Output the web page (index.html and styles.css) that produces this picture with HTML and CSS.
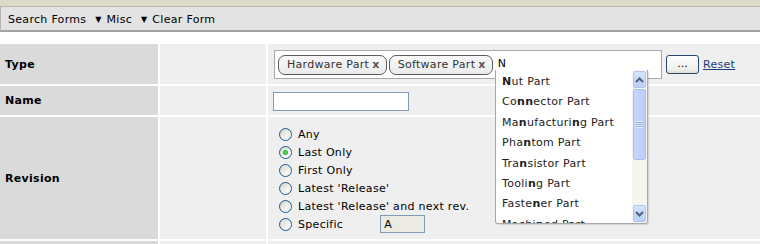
FILE: index.html
```html
<!DOCTYPE html>
<html lang="en">
<head>
    <meta charset="UTF-8">
    <title>Search Parts</title>
    <link rel="stylesheet" href="styles.css">
</head>
<body>
    <div class="topband"></div>
    <div class="toolbar">
        <span class="menu">Search Forms <span class="caret">&#9660;</span></span>
        <span class="menu">Misc <span class="caret">&#9660;</span></span>
        <span class="menu">Clear Form</span>
    </div>

    <div class="form">
        <!-- Type -->
        <div class="label">Type</div>
        <div class="blank"></div>
        <div class="field type-field">
            <div class="tagbox">
                <span class="tag">Hardware Part <b class="x">x</b></span>
                <span class="tag">Software Part <b class="x">x</b></span>
                <span class="typed">N</span>
            </div>
            <button class="dots">...</button>
            <a href="#" class="reset">Reset</a>

            <div class="suggest">
                <ul class="items">
                    <li><b>N</b>ut Part</li>
                    <li>Co<b>nn</b>ector Part</li>
                    <li>Ma<b>n</b>ufacturi<b>n</b>g Part</li>
                    <li>Pha<b>n</b>tom Part</li>
                    <li>Tra<b>n</b>sistor Part</li>
                    <li>Tooli<b>n</b>g Part</li>
                    <li>Faste<b>n</b>er Part</li>
                    <li>Machi<b>n</b>ed Part</li>
                </ul>
                <div class="scrollbar">
                    <div class="arrow">
                        <svg width="9" height="6" viewBox="0 0 9 6"><path d="M1 5 L4.5 1.5 L8 5" fill="none" stroke="#4d6185" stroke-width="2"/></svg>
                    </div>
                    <div class="thumb"><span class="grip"></span></div>
                    <div class="track"></div>
                    <div class="arrow">
                        <svg width="9" height="6" viewBox="0 0 9 6"><path d="M1 1 L4.5 4.5 L8 1" fill="none" stroke="#4d6185" stroke-width="2"/></svg>
                    </div>
                </div>
            </div>
        </div>

        <!-- Name -->
        <div class="label">Name</div>
        <div class="blank"></div>
        <div class="field name-field">
            <input type="text" class="text-input">
        </div>

        <!-- Revision -->
        <div class="label">Revision</div>
        <div class="blank"></div>
        <div class="field radios">
            <label class="opt"><span class="radio"></span>Any</label>
            <label class="opt"><span class="radio checked"></span>Last Only</label>
            <label class="opt"><span class="radio"></span>First Only</label>
            <label class="opt"><span class="radio"></span>Latest 'Release'</label>
            <label class="opt"><span class="radio"></span>Latest 'Release' and next rev.</label>
            <label class="opt"><span class="radio"></span>Specific <span class="spec">A</span></label>
        </div>

        <div class="label"></div>
        <div class="blank"></div>
        <div class="field"></div>
    </div>
</body>
</html>
```

FILE: styles.css
```css
body {
    margin: 0;
    font-family: "DejaVu Sans", Verdana, sans-serif;
    font-size: 11px;
    letter-spacing: 0.3px;
    color: #000;
    background: #fff;
    overflow: hidden;
}
.topband {
    height: 6px;
    background-color: #dcdbc9;
}
.toolbar {
    box-sizing: border-box;
    height: 26px;
    display: flex;
    align-items: center;
    gap: 5px;
    padding: 1px 0 0 7px;
    background-color: #e3e3e3;
    border-top: 1px solid #b4b4b0;
    border-bottom: 2px solid #a2a2a2;
    border-left: 1px solid #b4b4b0;
}
.caret {
    font-size: 8px;
    margin-left: 5px;
    vertical-align: 1px;
}
.form {
    margin-top: 12px;
    display: grid;
    grid-template-columns: 158px 106px 1fr;
    grid-template-rows: 40px 29px 122px 20px;
    gap: 2px;
}
.label {
    background-color: #dadada;
    font-weight: bold;
    display: flex;
    align-items: center;
    padding-left: 5px;
}
.blank, .field {
    background-color: #efefef;
}
.field {
    position: relative;
}
.type-field {
    display: flex;
    align-items: flex-start;
    padding: 6px 0 0 6px;
}
.tagbox {
    box-sizing: border-box;
    width: 388px;
    height: 29px;
    display: flex;
    align-items: center;
    gap: 2px;
    padding-left: 3px;
    background: #fff;
    border: 1px solid #a9a9a9;
}
.tag {
    box-sizing: border-box;
    height: 20px;
    display: flex;
    align-items: center;
    padding: 0 6px 0 8px;
    border: 1px solid #5c5c5c;
    border-radius: 7px;
    background: linear-gradient(#f8f8f8, #ebebeb);
    color: #333;
}
.tag .x {
    margin-left: 3px;
    color: #555;
}
.typed {
    margin-left: 3px;
    margin-top: -3px;
}
.dots {
    margin: 5px 0 0 4px;
    width: 33px;
    height: 19px;
    padding: 0 0 3px;
    font-family: inherit;
    font-size: 11px;
    border: 1px solid #26466e;
    border-radius: 3px;
    background: linear-gradient(#ffffff, #f0f0ea 80%, #dcdcd2);
}
.reset {
    margin: 8px 0 0 4px;
    color: #1a3a78;
}
.suggest {
    position: absolute;
    left: 227px;
    top: 26px;
    width: 153px;
    height: 154px;
    box-sizing: border-box;
    display: flex;
    background: #fff;
    border: 1px solid #a8a8a8;
    border-top: none;
    border-radius: 0 0 3px 3px;
    box-shadow: 1px 1px 1px rgba(0,0,0,0.12);
    overflow: hidden;
    z-index: 2;
}
.items {
    list-style: none;
    margin: 0;
    padding: 2px 0 0;
    flex: 1;
    overflow: hidden;
}
.items li {
    height: 20.4px;
    line-height: 20.4px;
    padding-left: 6px;
    color: #222;
    white-space: nowrap;
}
.scrollbar {
    width: 15px;
    display: flex;
    flex-direction: column;
    background: #f6f5ef;
}
.arrow {
    height: 15px;
    margin: 1px 1px 0;
    display: flex;
    align-items: center;
    justify-content: center;
    background: linear-gradient(#d8e4fd, #bccefa);
    border: 1px solid #b2c4ef;
    border-radius: 2px;
}
.scrollbar .arrow:last-child {
    margin: 0 1px 1px;
}
.thumb {
    height: 69px;
    margin: 1px 1px 0;
    display: flex;
    align-items: center;
    justify-content: center;
    background: linear-gradient(90deg, #c8d7fc, #bacdfa);
    border: 1px solid #a9bdf0;
    border-radius: 2px;
}
.grip {
    width: 7px;
    height: 7px;
    background: repeating-linear-gradient(#eef3fe 0 1px, #8ca6e6 1px 2px);
}
.track {
    flex: 1;
}
.name-field {
    padding: 6px 0 0 5px;
}
.text-input {
    box-sizing: border-box;
    width: 136px;
    height: 19px;
    margin: 0;
    border: 1px solid #7f9db9;
    background: #fff;
    display: block;
}
.radios {
    padding: 8px 0 0 11px;
    display: flex;
    flex-direction: column;
}
.opt {
    height: 18px;
    display: flex;
    align-items: center;
    gap: 6px;
}
.radio {
    box-sizing: border-box;
    width: 13px;
    height: 13px;
    border-radius: 50%;
    border: 1px solid #1f5a86;
    background: linear-gradient(135deg, #d4d4cc, #f4f4f0 60%, #fff);
    position: relative;
}
.radio.checked::after {
    content: "";
    position: absolute;
    left: 3px;
    top: 3px;
    width: 5px;
    height: 5px;
    border-radius: 50%;
    background: radial-gradient(#5ad75a, #21a121);
}
.spec {
    box-sizing: border-box;
    width: 45px;
    height: 18px;
    margin-left: 31px;
    padding: 1px 0 0 3px;
    border: 1px solid #7f9db9;
    background-color: #ebebe4;
    line-height: 15px;
}
```
